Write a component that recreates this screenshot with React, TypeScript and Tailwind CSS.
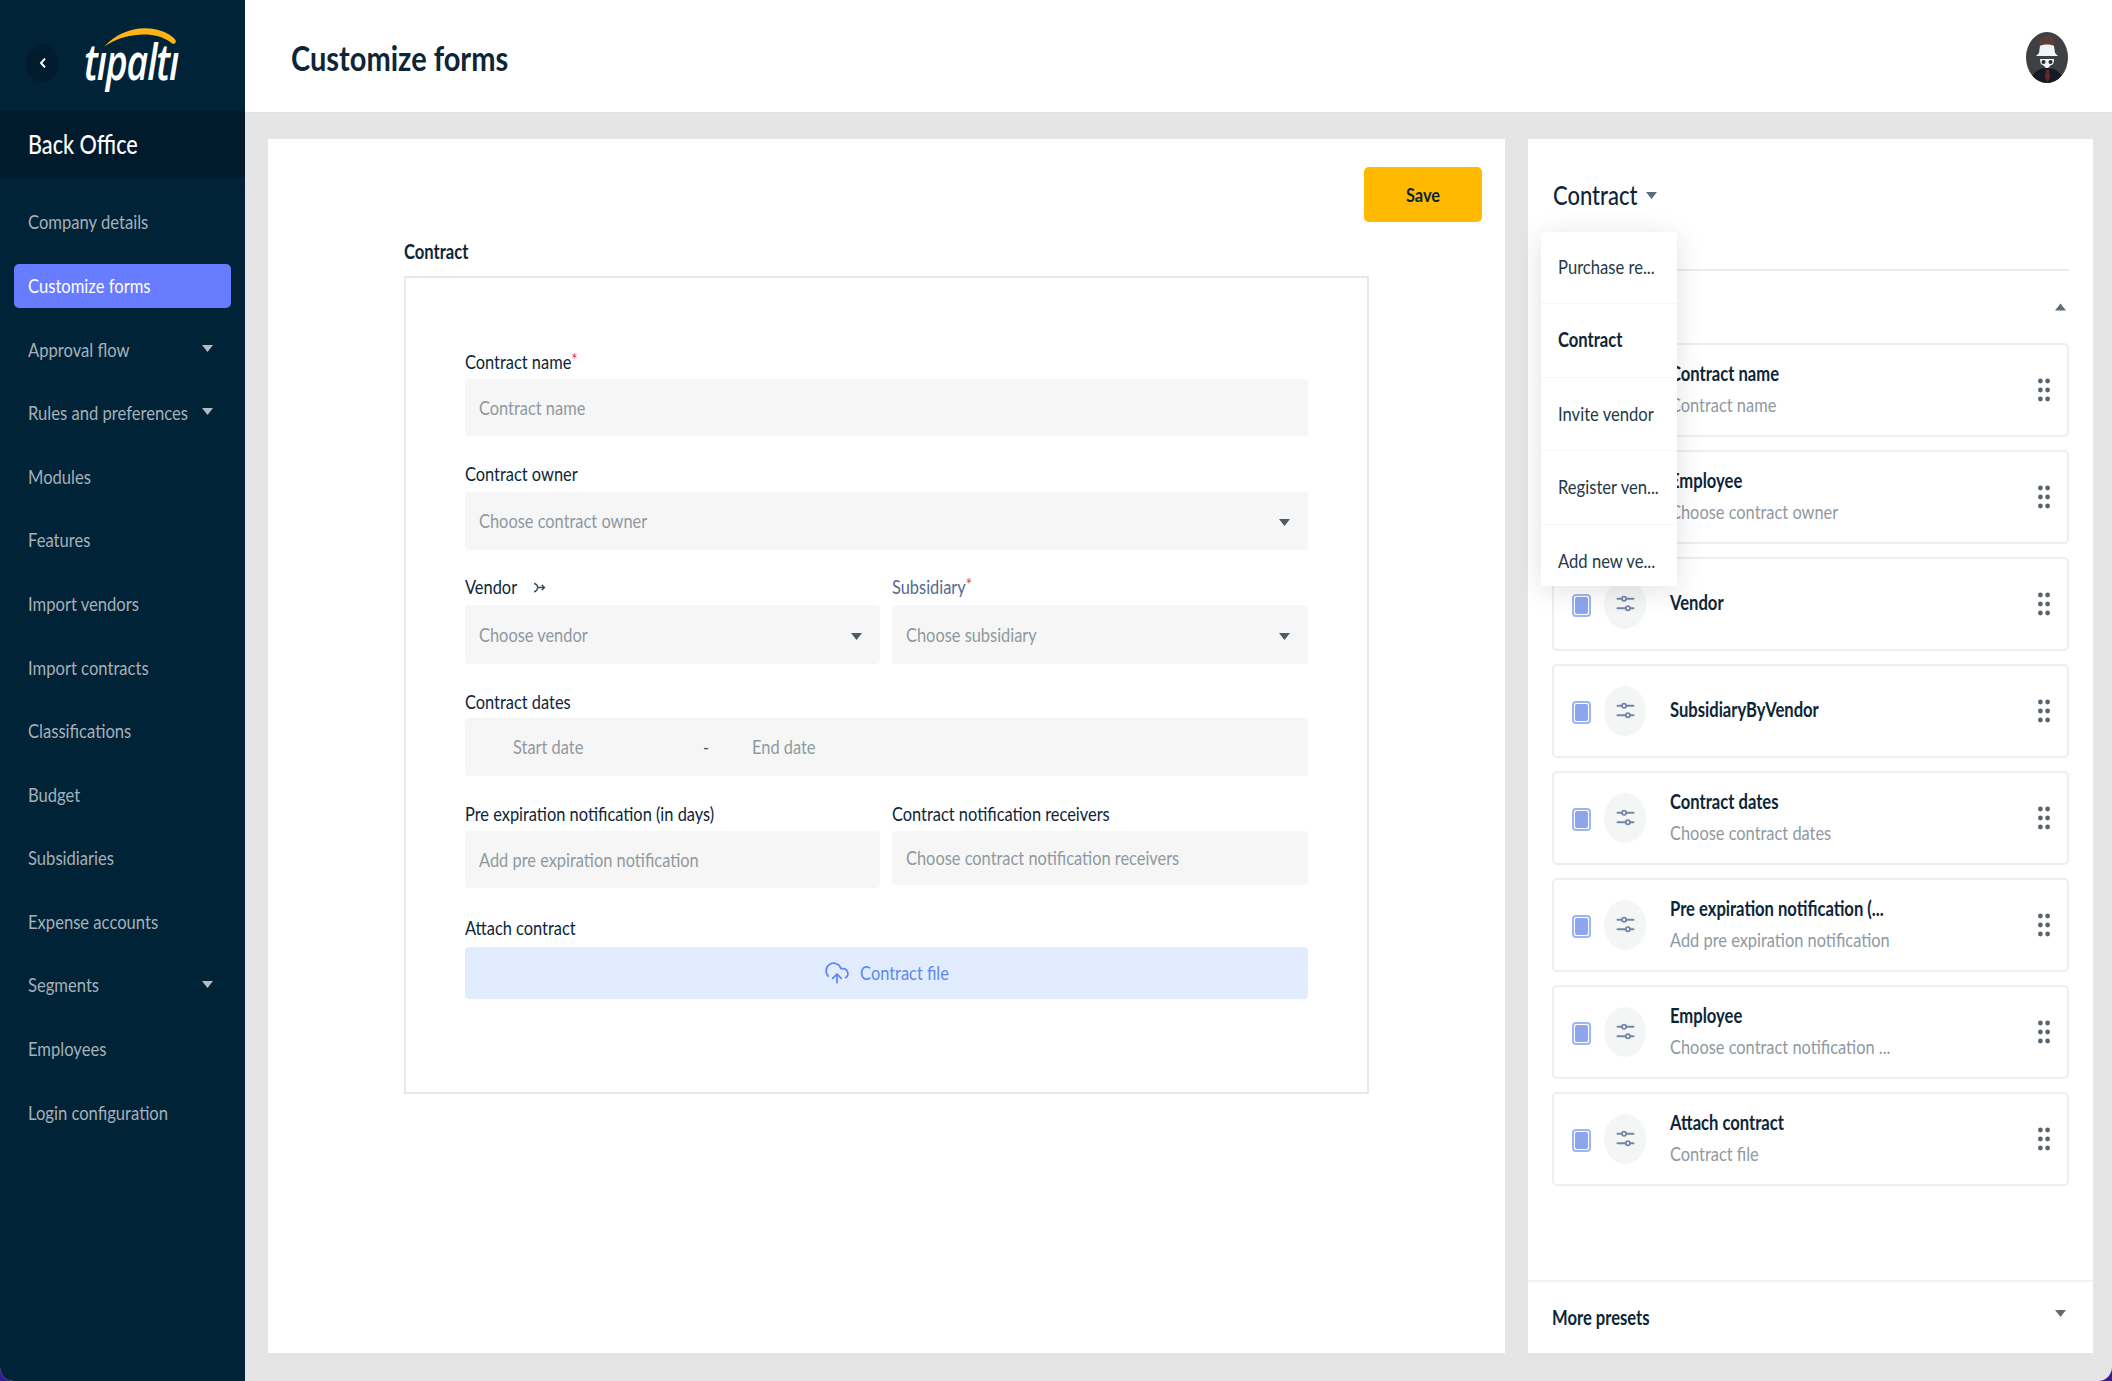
import React from "react";
import { CloudUpload } from "lucide-react";

const T = ({ className = "", children }: { className?: string; children: React.ReactNode }) => (
  <span className={`inline-block scale-y-[1.2] whitespace-nowrap ${className}`}>{children}</span>
);

const Caret = ({ className = "", up = false }: { className?: string; up?: boolean }) => (
  <svg viewBox="0 0 12 8" className={`w-[11px] h-[7.5px] fill-current ${className}`}>
    <path d={up ? "M6 0.5 L12 8 L0 8 Z" : "M0 0 L12 0 L6 7.5 Z"} />
  </svg>
);

const nav: [string, boolean, boolean][] = [
  ["Company details", false, false],
  ["Customize forms", false, true],
  ["Approval flow", true, false],
  ["Rules and preferences", true, false],
  ["Modules", false, false],
  ["Features", false, false],
  ["Import vendors", false, false],
  ["Import contracts", false, false],
  ["Classifications", false, false],
  ["Budget", false, false],
  ["Subsidiaries", false, false],
  ["Expense accounts", false, false],
  ["Segments", true, false],
  ["Employees", false, false],
  ["Login configuration", false, false],
];

const cards: [string, string][] = [
  ["Contract name", "Contract name"],
  ["Employee", "Choose contract owner"],
  ["Vendor", ""],
  ["SubsidiaryByVendor", ""],
  ["Contract dates", "Choose contract dates"],
  ["Pre expiration notification (...", "Add pre expiration notification"],
  ["Employee", "Choose contract notification ..."],
  ["Attach contract", "Contract file"],
];

const Label = ({ children, className = "" }: { children: React.ReactNode; className?: string }) => (
  <div className={`h-[22px] flex items-center text-[16.4px] text-[#0c2638] ${className}`}>
    <T>{children}</T>
  </div>
);

const Input = ({ text, className = "", caret = false }: { text: string; className?: string; caret?: boolean }) => (
  <div className={`bg-[#f6f6f6] rounded-[4px] flex items-center justify-between pt-[1px] pl-[14px] pr-[18px] text-[16.4px] text-[#8f999f] ${className}`}>
    <T>{text}</T>
    {caret && <Caret className="text-[#4e5b63] mt-[3px]" />}
  </div>
);

const Star = () => <span className="text-[#f0304f] text-[15px] relative -top-[3px]">*</span>;

const Sliders = () => (
  <svg viewBox="0 0 20 22" className="w-[19px] h-[21px] text-[#7486a8]" fill="none" stroke="currentColor" strokeWidth="1.9" strokeLinecap="round">
    <path d="M1.5 6H6M11 6H18.5" />
    <circle cx="8.5" cy="6" r="2.2" />
    <path d="M1.5 16H10M15 16H18.5" />
    <circle cx="12.5" cy="16" r="2.2" />
  </svg>
);

const Drag = () => (
  <svg viewBox="0 0 12 24" className="w-[12px] h-[24px] fill-[#59666f]">
    {[3, 12, 21].map((y) => (
      <g key={y}>
        <circle cx="2.4" cy={y} r="2.4" />
        <circle cx="9.6" cy={y} r="2.4" />
      </g>
    ))}
  </svg>
);

const Card = ({ title, sub }: { title: string; sub: string }) => (
  <div className="h-[94px] border-2 border-[#eeeeee] rounded-[5px] flex items-center pl-[18px] pr-[17px]">
    <div className="w-[19px] h-[23px] mt-[2px] border-2 border-[#9db4f7] rounded-[4px] p-[1px] flex">
      <div className="flex-1 bg-[#8ca5ee] rounded-[2px]" />
    </div>
    <div className="ml-[13px] w-[42px] h-[50px] rounded-[50%] bg-[#f4f6f6] flex items-center justify-center -mt-[1px]">
      <Sliders />
    </div>
    <div className={`ml-[24px] flex-1 flex flex-col ${sub ? "gap-[9px]" : "-mt-[1px]"}`}>
      <div className="h-[22px] flex items-center text-[16.6px] font-bold text-[#0c2638]"><T>{title}</T></div>
      {sub && <div className="h-[22px] flex items-center text-[16.4px] text-[#8f999f]"><T>{sub}</T></div>}
    </div>
    <Drag />
  </div>
);

const Avatar = () => (
  <svg viewBox="0 0 42 51" className="w-[42px] h-[51px]">
    <defs>
      <clipPath id="av"><ellipse cx="21" cy="25.5" rx="21" ry="25.5" /></clipPath>
    </defs>
    <g clipPath="url(#av)">
      <rect width="42" height="51" fill="#3d4144" />
      <ellipse cx="21" cy="12" rx="8" ry="9" fill="#5a4039" />
      <path d="M4 51 C6 40 13 36 21 36 C29 36 36 40 38 51 Z" fill="#161a24" />
      <path d="M20 38 L23 38 L24 46 L21.5 50 L19 46 Z" fill="#6b2530" />
      <path d="M13 21 L14 14 C17 12 25 12 28 14 L29 21 L32 24 L10 24 Z" fill="#f4f4f4" />
      <path d="M14 27 H28 C28 31 27 33 25 33 L22 36 H20 L17 33 C15 33 14 31 14 27 Z" fill="#f2f2f2" />
      <circle cx="17.5" cy="30" r="2" fill="#2a2a2a" />
      <circle cx="24.5" cy="30" r="2" fill="#2a2a2a" />
    </g>
  </svg>
);

export default function App() {
  return (
    <div className="w-[2112px] h-[1381px] bg-[#3b1c8c] overflow-hidden" style={{ fontFamily: '"Lato", "Open Sans", sans-serif' }}>
      <div className="h-full flex bg-[#e5e5e5] rounded-b-[14px] overflow-hidden">
        <aside className="w-[245px] shrink-0 bg-[#012337] flex flex-col">
          <div className="h-[111px] flex items-center relative pl-[26px]">
            <div className="w-[33px] h-[38px] mt-[14px] rounded-[50%] bg-[#011c2e] flex items-center justify-center text-white">
              <svg viewBox="0 0 10 14" className="w-[8px] h-[12px]" fill="none" stroke="currentColor" strokeWidth="2.4"><path d="M7.5 1.5 L2.5 7 L7.5 12.5" /></svg>
            </div>
            <span className="ml-[25px] mt-[10px] inline-block scale-y-[1.36] italic font-semibold text-white text-[37.5px] leading-none tracking-[-1.2px]" style={{ fontFamily: '"Open Sans", sans-serif' }}>tıpaltı</span>
            <svg viewBox="0 0 80 22" className="absolute left-[104px] top-[28px] w-[74px] h-[21px] fill-[#fdb515]">
              <path d="M0 20 C12 7 28 0 44 0 C58 0 70 5 76 11 C80 15 76 19 72 15 C62 8 50 6 38 7 C24 8 11 12 0 20 Z" />
            </svg>
          </div>
          <div className="h-[67px] bg-[#011a2c] flex items-center pl-[28px] text-white text-[21.6px] font-medium"><T>Back Office</T></div>
          <nav className="pt-[13px] flex flex-col">
            {nav.map(([label, caret, active]) => (
              <div key={label} className="h-[63.6px] flex items-center">
                <div className={`w-[217px] h-[44px] ml-[14px] pl-[14px] pr-[18px] flex items-center justify-between rounded-[5px] text-[16.6px] ${active ? "bg-[#677cff] text-white" : "text-[#a5b0b8]"}`}>
                  <T>{label}</T>
                  {caret && <Caret className="text-[#b3bcc3] -mt-[3px]" />}
                </div>
              </div>
            ))}
          </nav>
        </aside>

        <div className="flex-1 flex flex-col min-w-0">
          <header className="h-[113px] shrink-0 bg-white border-b border-[#e0e0e0] flex items-center justify-between pt-[3px] pl-[46px] pr-[44px]">
            <div className="text-[29px] font-bold text-[#0c2638]"><T>Customize forms</T></div>
            <Avatar />
          </header>

          <div className="flex-1 flex pt-[26px] pl-[23px] pr-[19px] pb-[28px] gap-[23px] min-h-0">
            <main className="w-[1237px] bg-white">
              <div className="flex justify-end pt-[28px] pr-[23px]">
                <button className="w-[118px] h-[55px] pt-[1px] bg-[#ffb900] rounded-[5px] text-[16.4px] font-bold text-[#0c2638]"><T>Save</T></button>
              </div>
              <div className="ml-[136px] mt-[19px] h-[22px] flex items-center text-[16.6px] font-bold text-[#0c2638]"><T>Contract</T></div>
              <div className="mx-[136px] mt-[13px] h-[818px] border-2 border-[#e8e8e8] px-[59px] pt-[73px]">
                <Label>Contract name<Star /></Label>
                <Input text="Contract name" className="mt-[6px] h-[57px]" />
                <Label className="mt-[27px]">Contract owner</Label>
                <Input text="Choose contract owner" caret className="mt-[7px] h-[58px]" />
                <div className="mt-[26px] flex gap-[12px]">
                  <div className="w-[415px]">
                    <Label>
                      Vendor
                      <svg viewBox="0 0 14 10" className="inline-block ml-[16px] w-[13px] h-[9px] -mt-[3px]" fill="none" stroke="#3d4f5c" strokeWidth="1.5"><path d="M1 1 C4 2 5 4 5 5 C5 6 4 8 1 9 M4.5 5H12 M9.5 2.5 L12.5 5 L9.5 7.5" /></svg>
                    </Label>
                    <Input text="Choose vendor" caret className="mt-[7px] h-[59px]" />
                  </div>
                  <div className="w-[416px]">
                    <Label className="text-[#56688f]">Subsidiary<Star /></Label>
                    <Input text="Choose subsidiary" caret className="mt-[7px] h-[59px]" />
                  </div>
                </div>
                <Label className="mt-[27px]">Contract dates</Label>
                <div className="mt-[5px] h-[58px] pt-[1px] bg-[#f6f6f6] rounded-[4px] flex items-center text-[16.4px] text-[#8f999f]">
                  <T className="ml-[48px] w-[190px]">Start date</T>
                  <T className="w-[49px] text-[#4e5b63]">-</T>
                  <T>End date</T>
                </div>
                <div className="mt-[27px] flex gap-[12px]">
                  <div className="w-[415px]">
                    <Label>Pre expiration notification (in days)</Label>
                    <Input text="Add pre expiration notification" className="mt-[6px] h-[57px]" />
                  </div>
                  <div className="w-[416px]">
                    <Label>Contract notification receivers</Label>
                    <Input text="Choose contract notification receivers" className="mt-[6px] h-[54px]" />
                  </div>
                </div>
                <Label className="mt-[29px]">Attach contract</Label>
                <div className="mt-[8px] h-[52px] bg-[#e2ecff] rounded-[4px] flex items-center justify-center gap-[10px] text-[16.4px] text-[#5f87ee]">
                  <CloudUpload className="w-[26px] h-[30px]" strokeWidth={1.6} />
                  <T>Contract file</T>
                </div>
              </div>
            </main>

            <section className="w-[565px] bg-white relative flex flex-col">
              <div className="pl-[25px] pt-[39px] h-[130px]">
                <div className="h-[32px] flex items-center gap-[9px] text-[22px] font-medium text-[#0c2638]">
                  <T>Contract</T>
                  <Caret className="text-[#5f6c75] mt-[4px]" />
                </div>
              </div>
              <div className="ml-[25px] mr-[24px] border-t-2 border-[#ececec]" />
              <div className="h-[72px] flex items-center justify-end pr-[27px]">
                <Caret up className="text-[#5f6c75]" />
              </div>
              <div className="ml-[24px] mr-[24px] flex flex-col gap-[13px]">
                {cards.map(([t, s], i) => (
                  <Card key={i} title={t} sub={s} />
                ))}
              </div>
              <div className="mt-auto h-[73px] pt-[2px] border-t-2 border-[#f2f2f2] flex items-center justify-between pl-[24px] pr-[27px] text-[16.6px] font-bold text-[#0c2638]">
                <T>More presets</T>
                <Caret className="text-[#5f6c75] -mt-[10px]" />
              </div>

              <div className="absolute left-[13px] top-[93px] w-[136px] h-[354px] bg-white rounded-[4px] shadow-[0_4px_28px_rgba(0,0,0,0.12)] flex flex-col text-[16.6px] text-[#24394a] overflow-hidden">
                {["Purchase re...", "Contract", "Invite vendor", "Register ven...", "Add new ve..."].map((item, i) => (
                  <div key={item} className={`shrink-0 flex items-center pl-[17px] ${i === 0 ? "h-[72px]" : "h-[73.7px]"} ${i < 4 ? "border-b border-[#f6f6f6]" : ""} ${i === 1 ? "font-bold text-[#0c2638]" : ""}`}>
                    <T>{item}</T>
                  </div>
                ))}
              </div>
            </section>
          </div>
        </div>
      </div>
    </div>
  );
}
